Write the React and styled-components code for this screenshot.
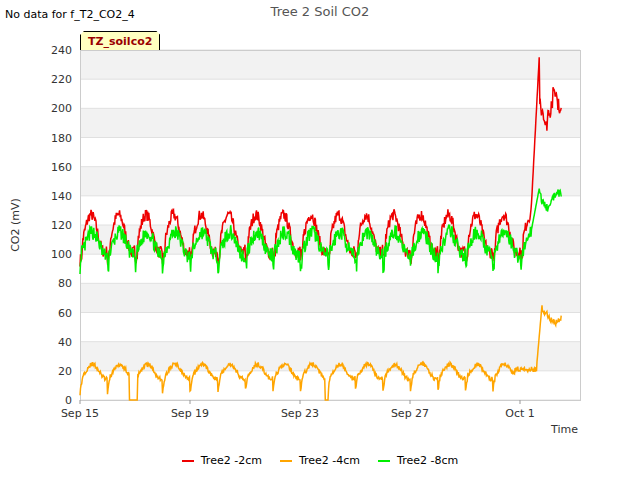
import React from "react";
import styled, { createGlobalStyle } from "styled-components";

const Global = createGlobalStyle`
  html,body{margin:0;padding:0;background:#fff;}
  body{font-family:"DejaVu Sans",sans-serif;}
`;
const Page = styled.div`position:relative;width:640px;height:480px;overflow:hidden;`;
const NoData = styled.div`position:absolute;left:5px;top:8px;font-size:11px;color:#000;`;
const Title = styled.div`position:absolute;left:0;right:0;top:4px;text-align:center;font-size:13px;color:#555;`;
const Badge = styled.div`
  position:absolute;left:80px;top:31px;height:18px;padding:0 7px;line-height:19px;
  background:#ffffc0;border:1px solid #000;border-bottom:none;font-size:11px;font-weight:bold;color:#990000;
  clip-path:polygon(4px 0,calc(100% - 4px) 0,100% 4px,100% 100%,0 100%,0 4px);
`;
const Legend = styled.div`position:absolute;left:0;right:0;top:454px;display:flex;justify-content:center;gap:18px;font-size:11px;`;
const Item = styled.div`display:flex;align-items:center;gap:7px;`;
const Swatch = styled.span`width:12px;height:2px;background:${p=>p.c};`;

const L=80,T=50,W=500,H=350;
const PX=27.5;
const yv=v=>T+H-v/240*H;
function rnd(s){let x=s;return()=>{x=(x*16807)%2147483647;return x/2147483647;};}
function series(kind){
  const r=rnd(kind==="r"?7:kind==="g"?13:29);
  const pts=[];
  for(let d=0;d<=17.5;d+=0.02){
    const ph=(d%1);
    let v;
    if(kind==="r"){
      v=114+13*Math.sin(2*Math.PI*(d-0.15))+ (ph<0.1?-8:0)+r()*8-4;
      if(d>16.4){const t=d-16.4;v=t<0.3?128+t/0.3*107:200+10*Math.sin(t*9)+r()*14-7;}
    }else if(kind==="g"){
      v=107+8*Math.sin(2*Math.PI*(d-0.2))+r()*10-5;
      if(ph<0.06)v-=8;
      if(d>16.4){const t=d-16.4;v=t<0.3?115+t/0.3*30:137+5*Math.sin(t*8)+r()*6-3;}
    }else{
      v=18+5*Math.sin(2*Math.PI*(d-0.2))+r()*3;
      if(ph<0.1)v-=10*(1-ph/0.1);
      if((d>1.8&&d<2.1)||(d>8.9&&d<9.02))v=0;
      if(d>15.8&&d<16.6)v=19+r()*4;
      if(d>16.6){const t=d-16.6;v=t<0.2?22+t/0.2*43:57+4*Math.sin(t*7)+r()*4-2;}
    }
    v=Math.max(0,v);
    pts.push(`${(L+d*PX).toFixed(1)},${yv(v).toFixed(1)}`);
  }
  return pts.join(" ");
}
const red=series("r"),grn=series("g"),org=series("o");

export default function App(){
  const ys=[0,20,40,60,80,100,120,140,160,180,200,220,240];
  const xs=[["Sep 15",0],["Sep 19",4],["Sep 23",8],["Sep 27",12],["Oct 1",16]];
  return <Page><Global/>
    <NoData>No data for f_T2_CO2_4</NoData>
    <Title>Tree 2 Soil CO2</Title>
    <svg width="640" height="480" style={{display:"block"}}>
      {[20,60,100,140,180,220].map(v=><rect key={v} x={L} y={yv(v+20)} width={W} height={H/12} fill="#f2f2f2"/>)}
      {ys.map(v=><line key={v} x1={L} x2={L+W} y1={yv(v)} y2={yv(v)} stroke="#e0e0e0"/>)}
      <rect x={L+0.5} y={T+0.5} width={W} height={H} fill="none" stroke="#ccc"/>
      {ys.map(v=><text key={v} x={L-8} y={yv(v)+4} fontSize="11" textAnchor="end" fill="#333" fontFamily="DejaVu Sans">{v}</text>)}
      {xs.map(([t,d])=><g key={t}><line x1={L+d*PX} x2={L+d*PX} y1={T+H} y2={T+H+4} stroke="#999"/><text x={L+d*PX} y={T+H+17} fontSize="11" textAnchor="middle" fill="#333" fontFamily="DejaVu Sans">{t}</text></g>)}
      <text x="578" y="433" fontSize="11" textAnchor="end" fill="#333" fontFamily="DejaVu Sans">Time</text>
      <text transform="translate(19 225) rotate(-90)" fontSize="11" textAnchor="middle" fill="#333" fontFamily="DejaVu Sans">CO2 (mV)</text>
      <polyline points={red} fill="none" stroke="#ee0000" strokeWidth="1.5"/>
      <polyline points={org} fill="none" stroke="#ffa500" strokeWidth="1.5"/>
      <polyline points={grn} fill="none" stroke="#00ee00" strokeWidth="1.5"/>
    </svg>
    <Badge>TZ_soilco2</Badge>
    <Legend>
      <Item><Swatch c="#ee0000"/>Tree2 -2cm</Item>
      <Item><Swatch c="#ffa500"/>Tree2 -4cm</Item>
      <Item><Swatch c="#00ee00"/>Tree2 -8cm</Item>
    </Legend>
  </Page>;
}
